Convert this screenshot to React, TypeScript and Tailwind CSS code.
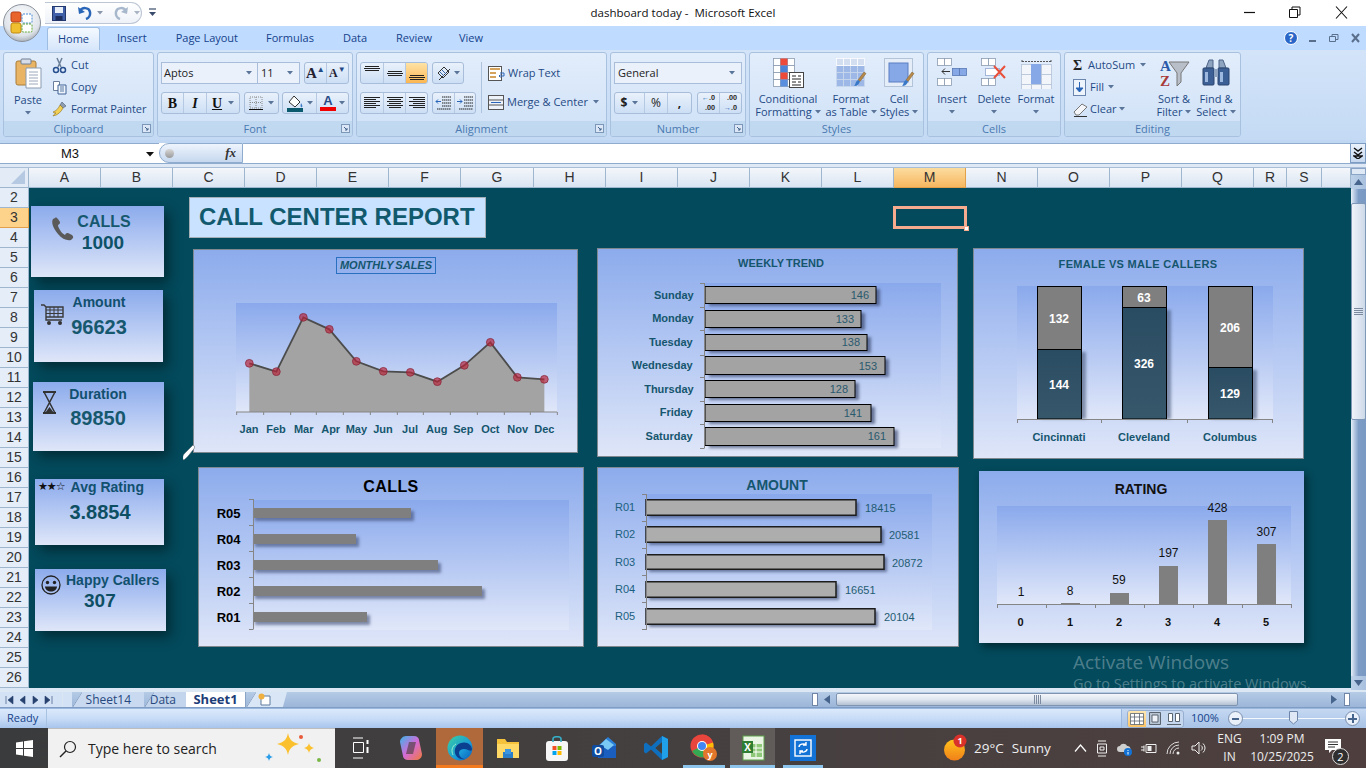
import React from "react";

const ui = "font-['Open_Sans',sans-serif]";
const ar = "font-['Liberation_Sans',Arial,sans-serif]";

function Caret({ c = "#5a7599" }: { c?: string }) {
  return (
    <svg width="6" height="4" viewBox="0 0 6 4" className="shrink-0">
      <path d="M0 0h6L3 3.5z" fill={c} />
    </svg>
  );
}

function Launcher() {
  return (
    <svg width="9" height="9" viewBox="0 0 9 9" className="shrink-0">
      <rect x=".5" y=".5" width="8" height="8" fill="#dbe7f6" stroke="#7d97b8" />
      <path d="M3 3l3 3M6 4v2H4" stroke="#45648c" fill="none" />
    </svg>
  );
}

function Group({ w, label, launcher, children }: { w: string; label: string; launcher?: boolean; children: React.ReactNode }) {
  return (
    <div className={`${w} h-[85px] shrink-0 rounded-[3px] border border-[#a7c1df] flex flex-col overflow-hidden bg-linear-to-b from-[#e2edfb] to-[#cfe1f7]`}>
      <div className="h-[68px] relative flex">{children}</div>
      <div className="h-[15px] bg-[#c1d8f1] flex items-center justify-center relative text-[11px] text-[#4a7ab0] pt-[1px]">
        <span>{label}</span>
        {launcher && (
          <span className="absolute right-[2px] top-[3px] flex">
            <Launcher />
          </span>
        )}
      </div>
    </div>
  );
}

function Tool({ className = "", children }: { className?: string; children: React.ReactNode }) {
  return <div className={`h-full flex items-center justify-center border-r border-[#b5c9e2] last:border-r-0 ${className}`}>{children}</div>;
}

function ToolGroup({ className = "", children }: { className?: string; children: React.ReactNode }) {
  return <div className={`flex rounded-[3px] border border-[#a7bdd9] bg-linear-to-b from-[#e9f1fb] to-[#cddff5] overflow-hidden ${className}`}>{children}</div>;
}

function AlignIcon({ kind }: { kind: "l" | "c" | "r" }) {
  const rows = [0, 2, 4, 6, 8, 10];
  return (
    <svg width="16" height="12" viewBox="0 0 16 12">
      {rows.map((y, i) => {
        const w = i % 2 === 0 ? 16 : 12;
        const x = kind === "l" ? 0 : kind === "c" ? (16 - w) / 2 : 16 - w;
        return <rect key={y} x={x} y={y} width={w} height="1" fill="#222" />;
      })}
    </svg>
  );
}

function VAlign({ pos }: { pos: number }) {
  return (
    <svg width="16" height="14" viewBox="0 0 16 14">
      {[0, 2, 4].map((d) => (
        <rect key={d} x={d === 2 ? 0 : 1} y={pos + d} width={d === 2 ? 16 : 14} height="1" fill="#222" />
      ))}
    </svg>
  );
}

function Cells({ x, y, cols, rows, s = 6, fill = "#fff", stroke = "#8a9bb0" }: { x: number; y: number; cols: number; rows: number; s?: number; fill?: string; stroke?: string }) {
  const out = [];
  for (let r = 0; r < rows; r++)
    for (let c = 0; c < cols; c++)
      out.push(<rect key={`${r}-${c}`} x={x + c * s + 0.5} y={y + r * s + 0.5} width={s} height={s} fill={fill} stroke={stroke} strokeWidth=".8" />);
  return <>{out}</>;
}

function Brush({ x, y }: { x: number; y: number }) {
  return (
    <g transform={`translate(${x} ${y})`}>
      <path d="M11 0l2 1.500-6 8-2-1.500z" fill="#b88a4a" stroke="#7a5a2a" strokeWidth=".5" />
      <path d="M5 8l2 1.500c-1 3-3 4.500-6 4.500 1.500-1 1.500-5 4-6z" fill="#3a78c8" />
    </g>
  );
}

function Large({ w, icon, l1, l2 }: { w: string; icon: React.ReactNode; l1: string; l2?: string }) {
  return (
    <div className={`${w} flex flex-col items-center pt-[5px]`}>
      <div className="h-[34px] flex items-start justify-center">{icon}</div>
      <div className="leading-[13px] text-center whitespace-nowrap">{l1}</div>
      <div className="leading-[13px] h-[13px] flex items-center gap-[3px] whitespace-nowrap">
        {l2 && <span>{l2}</span>}
        <Caret />
      </div>
    </div>
  );
}

function Ribbon() {
  return (
    <div className={`h-[90px] shrink-0 flex gap-[3px] pl-[3px] pt-[2px] bg-linear-to-b from-[#d3e4f9] to-[#c4daf4] ${ui} text-[11px] text-[#1f4a85]`}>
      <Group w="w-[151px]" label="Clipboard" launcher>
        <div className="w-[48px] flex flex-col items-center pt-[5px]">
          <svg width="27" height="31" viewBox="0 0 27 31">
            <rect x="1" y="3" width="20" height="24" rx="2" fill="#e9b565" stroke="#a97c38" />
            <rect x="6" y="1" width="10" height="5" rx="1" fill="#d6dde8" stroke="#6f7f94" />
            <path d="M11 10h15v20H11z" fill="#fff" stroke="#8a9bb0" />
            <path d="M14 14h9M14 17h9M14 20h9M14 23h9M14 26h9" stroke="#9aa8ba" />
          </svg>
          <span className="mt-[4px] leading-[13px]">Paste</span>
          <span className="mt-[5px]"><Caret /></span>
        </div>
        <div className="flex flex-col pt-[1px]">
          <div className="h-[22px] flex items-center gap-[4px]">
            <svg width="15" height="17" viewBox="0 0 15 17">
              <path d="M5 1l4 9M10 1L6 10" stroke="#6b7f99" strokeWidth="1.500" fill="none" />
              <circle cx="4" cy="13" r="2.500" fill="none" stroke="#28508f" strokeWidth="1.500" />
              <circle cx="11" cy="13" r="2.500" fill="none" stroke="#28508f" strokeWidth="1.500" />
            </svg>
            <span>Cut</span>
          </div>
          <div className="h-[22px] flex items-center gap-[4px]">
            <svg width="15" height="15" viewBox="0 0 15 15">
              <path d="M1.500 1.500h6v9h-6z" fill="#fff" stroke="#6a7f9c" />
              <path d="M6 5h8v9H6z" fill="#eef4fb" stroke="#3f6296" />
              <path d="M8 7h4M8 9h4M8 11h4" stroke="#5878a5" />
            </svg>
            <span>Copy</span>
          </div>
          <div className="h-[22px] flex items-center gap-[3px]">
            <svg width="16" height="16" viewBox="0 0 16 16">
              <path d="M10 1l4 4-3 2-3-3z" fill="#8e9cb0" stroke="#4a5a72" strokeWidth=".6" />
              <path d="M8 4l3 3c-2 4-5 7-10 8 1-2 3-3 3-3-1 0-2 0-3-1 3-1 5-3 7-7z" fill="#f2cf55" stroke="#8e6f1f" strokeWidth=".6" />
            </svg>
            <span className="whitespace-nowrap tracking-[-0.1px]">Format Painter</span>
          </div>
        </div>
      </Group>

      <Group w="w-[196px]" label="Font" launcher>
        <div className="pl-[3px] pt-[9px] flex flex-col gap-[8px]">
          <div className="flex h-[22px]">
            <div className="w-[97px] bg-[#eaf1fb] border border-[#a7bdd9] flex items-center justify-between px-[2px] text-[#222]">
              <span>Aptos</span>
              <span className="pr-[3px]"><Caret /></span>
            </div>
            <div className="w-[42px] bg-[#eaf1fb] border border-l-0 border-[#a7bdd9] flex items-center justify-between px-[3px] text-[#222]">
              <span>11</span>
              <span className="pr-[3px]"><Caret /></span>
            </div>
            <ToolGroup className="ml-[4px] w-[45px]">
              <Tool className="w-[22px]"><span className="font-['Liberation_Serif',serif] font-bold text-[15px] text-[#223]">A</span><span className="text-[8px] leading-none -mt-[8px]">▲</span></Tool>
              <Tool className="w-[22px]"><span className="font-['Liberation_Serif',serif] font-bold text-[12px] text-[#223]">A</span><span className="text-[8px] leading-none -mt-[8px]">▼</span></Tool>
            </ToolGroup>
          </div>
          <div className="flex h-[22px]">
            <ToolGroup className="w-[79px]">
              <Tool className="w-[22px]"><span className="font-['Liberation_Serif',serif] font-bold text-[14px] text-[#111]">B</span></Tool>
              <Tool className="w-[23px]"><span className="font-['Liberation_Serif',serif] font-bold italic text-[14px] text-[#111]">I</span></Tool>
              <Tool className="flex-1 gap-[6px]"><span className="font-['Liberation_Serif',serif] font-bold underline text-[14px] text-[#111]">U</span><Caret /></Tool>
            </ToolGroup>
            <ToolGroup className="ml-[4px] w-[35px]">
              <Tool className="flex-1 gap-[5px]">
                <svg width="14" height="14" viewBox="0 0 14 14">
                  <path d="M1 1h12v11H1zM7 1v11M1 6.500h12" stroke="#8a8a8a" strokeDasharray="1 1" fill="none" />
                  <path d="M0 13.500h14" stroke="#111" />
                </svg>
                <Caret />
              </Tool>
            </ToolGroup>
            <ToolGroup className="ml-[3px] w-[67px]">
              <Tool className="w-[34px] gap-[3px]">
                <svg width="17" height="17" viewBox="0 0 17 17">
                  <path d="M7 1l6 6-5 5-6-5z" fill="#fff" stroke="#333" />
                  <path d="M14 8c1 2 2 3 1 4s-2 0-1-4z" fill="#3a78c8" />
                  <rect x="0" y="13" width="16" height="4" fill="#0c5a6e" />
                </svg>
                <Caret />
              </Tool>
              <Tool className="flex-1 gap-[3px]">
                <div className="flex flex-col items-center">
                  <span className={`${ar} font-bold text-[13px] leading-[12px] text-[#274a86]`}>A</span>
                  <span className="w-[16px] h-[4px] bg-[#f00000]" />
                </div>
                <Caret />
              </Tool>
            </ToolGroup>
          </div>
        </div>
      </Group>

      <Group w="w-[251px]" label="Alignment" launcher>
        <div className="pl-[3px] pt-[9px] flex flex-col gap-[8px] w-[124px]">
          <div className="flex h-[22px] gap-[4px]">
            <ToolGroup className="w-[68px]">
              <Tool className="w-[23px]"><VAlign pos={0} /></Tool>
              <Tool className="w-[22px]"><VAlign pos={5} /></Tool>
              <Tool className="flex-1 bg-linear-to-b from-[#fde3a5] to-[#fbb64f]"><VAlign pos={9} /></Tool>
            </ToolGroup>
            <ToolGroup className="w-[32px]">
              <Tool className="flex-1 gap-[2px]">
                <svg width="16" height="15" viewBox="0 0 16 15">
                  <path d="M2 7l6-6 5 5-6 6zM3 14l11-11" stroke="#333" fill="none" />
                  <path d="M4 6l4 4M6 4l4 4" stroke="#3a68a8" />
                </svg>
                <Caret />
              </Tool>
            </ToolGroup>
          </div>
          <div className="flex h-[22px] gap-[4px]">
            <ToolGroup className="w-[68px]">
              <Tool className="w-[23px]"><AlignIcon kind="l" /></Tool>
              <Tool className="w-[22px]"><AlignIcon kind="c" /></Tool>
              <Tool className="flex-1"><AlignIcon kind="r" /></Tool>
            </ToolGroup>
            <ToolGroup className="w-[44px]">
              {[0, 1].map((k) => (
                <Tool key={k} className="flex-1">
                  <svg width="16" height="14" viewBox="0 0 16 14">
                    <path d="M7 1h9M7 4h9M7 7h9M7 10h9M2 13h14" stroke="#222" strokeDasharray="1.500 .5" />
                    <path d={k === 0 ? "M6 5.500H1m2-2l-2 2 2 2" : "M0 5.500h5m-2-2l2 2-2 2"} stroke="#2a66b8" fill="none" />
                  </svg>
                </Tool>
              ))}
            </ToolGroup>
          </div>
        </div>
        <div className="self-start mt-[9px] h-[51px] w-px bg-[#aec3dd]" />
        <div className="pl-[6px] pt-[9px] flex flex-col gap-[6px]">
          <div className="h-[23px] flex items-center gap-[3px] whitespace-nowrap">
            <svg width="17" height="15" viewBox="0 0 17 15">
              <rect x=".5" y=".5" width="13" height="14" fill="#fff" stroke="#555" />
              <path d="M2 3h10M2 7h6M2 11h6" stroke="#c6862a" strokeWidth="1.500" />
              <path d="M12 7h4v3h-5m1.500-1.500L11 10l1.500 1.500" stroke="#2a66b8" fill="none" />
            </svg>
            <span>Wrap Text</span>
          </div>
          <div className="h-[22px] flex items-center gap-[3px] whitespace-nowrap">
            <svg width="16" height="15" viewBox="0 0 16 15">
              <rect x=".5" y=".5" width="15" height="14" fill="#eef3fa" stroke="#555" />
              <path d="M.5 5h15M.5 10h15" stroke="#555" />
              <path d="M3 7.500h10" stroke="#2a66b8" />
            </svg>
            <span>Merge &amp; Center</span>
            <span className="ml-[2px]"><Caret /></span>
          </div>
        </div>
      </Group>

      <Group w="w-[136px]" label="Number" launcher>
        <div className="pl-[3px] pt-[9px] flex flex-col gap-[8px]">
          <div className="w-[128px] h-[22px] bg-[#eaf1fb] border border-[#a7bdd9] flex items-center justify-between px-[3px] text-[#222]">
            <span>General</span>
            <span className="pr-[3px]"><Caret /></span>
          </div>
          <div className="flex h-[22px] gap-[5px]">
            <ToolGroup className="w-[78px]">
              <Tool className="w-[30px] gap-[5px]"><span className="font-bold text-[12px] text-[#222]">$</span><Caret /></Tool>
              <Tool className="w-[23px]"><span className="text-[12px] text-[#222]">%</span></Tool>
              <Tool className="flex-1"><span className="font-bold text-[12px] text-[#222]">,</span></Tool>
            </ToolGroup>
            <ToolGroup className="w-[45px]">
              <Tool className="flex-1"><div className="text-[7px] leading-[10px] font-bold text-[#333] text-right"><div><span className="text-[#2a66b8]">←</span>.0</div><div>.00</div></div></Tool>
              <Tool className="flex-1"><div className="text-[7px] leading-[10px] font-bold text-[#333] text-right"><div>.00</div><div><span className="text-[#2a66b8]">→</span>.0</div></div></Tool>
            </ToolGroup>
          </div>
        </div>
      </Group>

      <Group w="w-[175px]" label="Styles">
        <Large
          w="w-[76px]"
          l1="Conditional"
          l2="Formatting"
          icon={
            <svg width="31" height="30" viewBox="0 0 31 30">
              <Cells x={0} y={0} cols={3} rows={4} s={7} />
              <rect x="7.500" y=".5" width="7" height="7" fill="#ee4a3a" />
              <rect x="7.500" y="7.500" width="7" height="7" fill="#4a82d8" />
              <rect x="7.500" y="14.500" width="7" height="7" fill="#ee4a3a" />
              <rect x="7.500" y="21.500" width="7" height="7" fill="#5a8fe0" />
              <rect x="16.500" y="14.500" width="14" height="15" fill="#fff" stroke="#444" />
              <path d="M19 18h4M25 18h3M19 21h9M19 24h4M25 24h3M19 27h9" stroke="#222" />
            </svg>
          }
        />
        <Large
          w="w-[50px]"
          l1="Format"
          l2="as Table"
          icon={
            <svg width="31" height="31" viewBox="0 0 31 31">
              <Cells x={0} y={0} cols={4} rows={4} s={7} fill="#9db8e6" stroke="#c9d7ec" />
              <Cells x={0} y={0} cols={4} rows={1} s={7} fill="#d3def0" stroke="#fff" />
              <Brush x={17} y={14} />
            </svg>
          }
        />
        <Large
          w="w-[46px]"
          l1="Cell"
          l2="Styles"
          icon={
            <svg width="31" height="31" viewBox="0 0 31 31">
              <rect x=".5" y=".5" width="28" height="28" fill="#e4edf8" stroke="#b3c3d8" />
              <rect x="5" y="5" width="19" height="19" fill="#86a8e6" stroke="#5a7fc4" />
              <Brush x={17} y={14} />
            </svg>
          }
        />
      </Group>

      <Group w="w-[134px]" label="Cells">
        <Large
          w="w-[48px]"
          l1="Insert"
          icon={
            <svg width="30" height="30" viewBox="0 0 30 30">
              <Cells x={0} y={0} cols={2} rows={1} s={7} />
              <Cells x={0} y={20} cols={2} rows={1} s={7} />
              <Cells x={15} y={10} cols={2} rows={1} s={7} fill="#86a8e6" stroke="#5878b4" />
              <path d="M13 13.500H5m3-3l-3 3 3 3" stroke="#333" fill="none" />
            </svg>
          }
        />
        <Large
          w="w-[36px]"
          l1="Delete"
          icon={
            <svg width="26" height="30" viewBox="0 0 26 30">
              <Cells x={0} y={0} cols={2} rows={1} s={7} />
              <Cells x={0} y={20} cols={2} rows={1} s={7} />
              <rect x="4.500" y="10.500" width="14" height="7" fill="#fff" stroke="#5878b4" strokeDasharray="1 1" />
              <path d="M13 8l11 12M24 8L13 20" stroke="#e8503a" strokeWidth="2" />
            </svg>
          }
        />
        <Large
          w="w-[48px]"
          l1="Format"
          icon={
            <svg width="31" height="31" viewBox="0 0 31 31">
              <path d="M1 2v3M30 2v3M1 3.500h29" stroke="#555" strokeDasharray="2 1" />
              <Cells x={0} y={6} cols={3} rows={3} s={10} fill="#f2f6fb" stroke="#b5c3d6" />
              <rect x="10" y="6" width="10" height="20" fill="#86a8e6" />
            </svg>
          }
        />
      </Group>

      <Group w="w-[177px]" label="Editing">
        <div className="w-[88px] pl-[8px] pt-[1px] flex flex-col">
          <div className="h-[22px] flex items-center gap-[5px] whitespace-nowrap">
            <span className="font-['Liberation_Serif',serif] font-bold text-[14px] text-[#222] w-[10px]">Σ</span>
            <span>AutoSum</span>
            <Caret />
          </div>
          <div className="h-[22px] flex items-center gap-[4px] whitespace-nowrap">
            <svg width="13" height="17" viewBox="0 0 13 17" className="shrink-0">
              <rect x=".5" y=".5" width="12" height="16" fill="#eef4fb" stroke="#6a86ae" />
              <path d="M6.500 3v9M3 9l3.500 4L10 9z" fill="#2a66b8" stroke="#2a66b8" />
            </svg>
            <span>Fill</span>
            <Caret />
          </div>
          <div className="h-[22px] flex items-center gap-[2px] whitespace-nowrap">
            <svg width="15" height="15" viewBox="0 0 15 15" className="shrink-0">
              <path d="M1 10l8-8 5 3-8 8H3z" fill="#f4f6f9" stroke="#777" />
              <path d="M1 14.500h13" stroke="#333" />
            </svg>
            <span>Clear</span>
            <Caret />
          </div>
        </div>
        <Large
          w="w-[42px]"
          l1="Sort &"
          l2="Filter"
          icon={
            <svg width="31" height="31" viewBox="0 0 31 31">
              <text x="1" y="13" className="font-['Liberation_Serif',serif] font-bold text-[15px]" fill="#2a5aa8">A</text>
              <text x="1" y="28" className="font-['Liberation_Serif',serif] font-bold text-[15px]" fill="#a83a3a">Z</text>
              <path d="M10 4h20l-8 11v9l-4 4V15z" fill="#b9bfc8" stroke="#777" />
            </svg>
          }
        />
        <Large
          w="w-[42px]"
          l1="Find &"
          l2="Select"
          icon={
            <svg width="28" height="30" viewBox="0 0 28 30">
              <path d="M4 10l3-8h4v8zM17 10V2h4l3 8z" fill="#8ea3c0" stroke="#4c6488" />
              <rect x="1" y="10" width="11" height="17" rx="1" fill="#3c5f95" stroke="#2a446e" />
              <rect x="16" y="10" width="11" height="17" rx="1" fill="#3c5f95" stroke="#2a446e" />
              <rect x="12" y="11" width="4" height="8" fill="#8ea3c0" />
              <rect x="3" y="14" width="3" height="10" fill="#9db9df" />
              <rect x="18" y="14" width="3" height="10" fill="#9db9df" />
            </svg>
          }
        />
      </Group>
    </div>
  );
}

function TitleBar() {
  return (
    <div className={`h-[26px] shrink-0 bg-white flex items-center justify-center relative ${ui} text-[11.5px] text-[#111]`}>
      <svg width="40" height="40" viewBox="0 0 40 40" className="absolute left-[2px] top-[3px] z-10">
        <defs>
          <radialGradient id="ob" cx=".5" cy=".35" r=".7">
            <stop offset="0" stopColor="#ffffff" />
            <stop offset=".7" stopColor="#dfe4ea" />
            <stop offset="1" stopColor="#9aa2ac" />
          </radialGradient>
        </defs>
        <circle cx="20" cy="20" r="18.500" fill="url(#ob)" stroke="#8a919b" />
        <rect x="9" y="9" width="10" height="10" rx="2" fill="#e8642a" stroke="#b8401a" />
        <rect x="20" y="11" width="10" height="9" rx="1" fill="#fff" stroke="#4a8ad4" strokeDasharray="2 1" />
        <rect x="9" y="20" width="10" height="10" rx="2" fill="#f0c030" stroke="#c08a10" />
        <rect x="20" y="21" width="10" height="8" rx="1" fill="#fff" stroke="#60a838" strokeDasharray="2 1" />
      </svg>
      <div className="absolute left-[45px] top-[2px] h-[22px] w-[97px] rounded-r-[12px] border border-[#bcc6d4] border-l-0 bg-linear-to-b from-white to-[#eef2f8] flex items-center pl-[7px] gap-[5px]">
        <svg width="14" height="15" viewBox="0 0 14 15">
          <rect x=".5" y=".5" width="13" height="14" fill="#3f5fa8" stroke="#23386e" />
          <rect x="3" y="1" width="8" height="6" fill="#e8eef8" />
          <rect x="3.500" y="10" width="7" height="4.500" fill="#1d2e5e" />
        </svg>
        <svg width="15" height="14" viewBox="0 0 15 14" className="ml-[6px]">
          <path d="M3 5c2-4 9-4 10 1 .5 3-1 6-4 7" fill="none" stroke="#2a66b8" strokeWidth="2.500" />
          <path d="M1 1l1 7 6-2z" fill="#2a66b8" />
        </svg>
        <Caret c="#8a97ab" />
        <svg width="15" height="14" viewBox="0 0 15 14" className="ml-[6px]">
          <path d="M12 5C10 1 3 1 2 6c-.5 3 1 6 4 7" fill="none" stroke="#a8b8cc" strokeWidth="2.500" />
          <path d="M14 1l-1 7-6-2z" fill="#a8b8cc" />
        </svg>
        <Caret c="#a8b4c4" />
      </div>
      <svg width="7" height="9" viewBox="0 0 7 9" className="absolute left-[149px] top-[8px]">
        <path d="M0 1h7" stroke="#3a4c6c" strokeWidth="1.200" />
        <path d="M0 4h7L3.500 8z" fill="#3a4c6c" />
      </svg>
      <span>dashboard today -&nbsp;&nbsp;Microsoft Excel</span>
      <div className="absolute right-[2px] top-0 h-[26px] flex items-center">
        <svg width="46" height="26" viewBox="0 0 46 26"><path d="M18 12.500h11" stroke="#111" strokeWidth="1.200" /></svg>
        <svg width="46" height="26" viewBox="0 0 46 26"><path d="M17.500 9.500h8v8h-8zM20 9V7h8v8h-2" fill="none" stroke="#111" /></svg>
        <svg width="46" height="26" viewBox="0 0 46 26"><path d="M18 6.500l11 12M29 6.500l-11 12" stroke="#111" strokeWidth="1.100" /></svg>
      </div>
    </div>
  );
}

function TabsRow() {
  const tabs: [string, string][] = [
    ["Insert", "ml-[17px]"],
    ["Page Layout", "ml-[29px]"],
    ["Formulas", "ml-[28px]"],
    ["Data", "ml-[29px]"],
    ["Review", "ml-[29px]"],
    ["View", "ml-[27px]"],
  ];
  return (
    <div className={`h-[24px] shrink-0 bg-[#bfdbff] flex items-end pl-[47px] relative ${ui} text-[11px] text-[#15428b]`}>
      <div className="w-[53px] h-[23px] rounded-t-[3px] border border-b-0 border-[#9dbde3] bg-linear-to-b from-[#f4f9ff] to-[#d6e6fa] flex items-center justify-center">Home</div>
      {tabs.map(([t, m]) => (
        <div key={t} className={`${m} h-[23px] flex items-center`}>{t}</div>
      ))}
      <div className="absolute right-[4px] top-[3px] h-[18px] flex items-center gap-[10px]">
        <span className="w-[14px] h-[14px] rounded-full bg-[#2a66c8] border border-white text-white text-[10px] font-bold leading-[12px] text-center">?</span>
        <svg width="10" height="10" viewBox="0 0 10 10"><path d="M1 8h7" stroke="#5a6f8c" strokeWidth="2" /></svg>
        <svg width="12" height="10" viewBox="0 0 12 10"><path d="M1.500 3.500h6v5h-6zM4 3V1.500h6v5H8" fill="none" stroke="#5a6f8c" /></svg>
        <svg width="12" height="10" viewBox="0 0 12 10"><path d="M2 1l7 8M9 1L2 9" stroke="#5a6f8c" strokeWidth="2" /></svg>
      </div>
    </div>
  );
}

function FormulaBar() {
  return (
    <div className="shrink-0 bg-[#d5e3f5]">
      <div className="h-[3px] bg-[#bfd7f3]" />
      <div className={`h-[20px] flex bg-white ${ar}`}>
        <div className="w-[159px] relative flex items-center border-t border-[#8fabcd] text-[13px] text-[#111]">
          <span className="ml-[61px]">M3</span>
          <svg width="8" height="5" viewBox="0 0 8 5" className="absolute right-[5px] top-[8px]"><path d="M0 0h8L4 4.500z" fill="#111" /></svg>
        </div>
        <div className="w-[84px] rounded-l-[10px] border border-[#8fabcd] bg-linear-to-b from-[#eef4fc] to-[#c6d8ef] flex items-center justify-between pl-[5px] pr-[6px]">
          <span className="w-[9px] h-[9px] rounded-full bg-linear-to-b from-[#d8d8d8] to-[#9a9a9a]" />
          <span className="font-['Liberation_Serif',serif] italic font-bold text-[13px] text-[#333]">fx</span>
        </div>
        <div className="flex-1 border-t border-[#8fabcd]" />
        <div className="w-[16px] border border-[#7d9cc4] bg-linear-to-b from-[#eaf2fb] to-[#c6d8ef] flex items-center justify-center">
          <svg width="10" height="12" viewBox="0 0 10 12"><path d="M1 1l4 3 4-3M1 5l4 3 4-3M1 9h8L5 12z" fill="none" stroke="#111" strokeWidth="1.400" /></svg>
        </div>
      </div>
      <div className="h-[5px] border-t border-[#8fabcd] bg-[#dfe9f6] border-b border-b-[#a8bdd8]" />
    </div>
  );
}

const columns: [string, string][] = [
  ["A", "w-[72px]"], ["B", "w-[72px]"], ["C", "w-[72px]"], ["D", "w-[72px]"], ["E", "w-[72px]"], ["F", "w-[72px]"], ["G", "w-[73px]"],
  ["H", "w-[72px]"], ["I", "w-[72px]"], ["J", "w-[72px]"], ["K", "w-[72px]"], ["L", "w-[72px]"], ["M", "w-[72px]"], ["N", "w-[72px]"],
  ["O", "w-[72px]"], ["P", "w-[72px]"], ["Q", "w-[72px]"], ["R", "w-[33px]"], ["S", "w-[35px]"], ["", "w-[29px]"],
];

function ColumnHeader() {
  return (
    <div className={`h-[20px] flex ${ar} text-[14px] text-[#333]`}>
      <div className="w-[29px] bg-[#e3ebf6] border-r border-b border-[#9eb6ce] flex items-end justify-end p-[3px]">
        <svg width="14" height="14" viewBox="0 0 14 14"><path d="M14 0v14H0z" fill="#b5c9e3" /></svg>
      </div>
      {columns.map(([c, w]) => (
        <div
          key={c || "blank"}
          className={`${w} border-r border-b flex items-center justify-center ${c === "M" ? "border-[#e2a04a] bg-linear-to-b from-[#fbdc9e] to-[#f6b75f]" : "border-[#9eb6ce] bg-linear-to-b from-[#f4f7fb] to-[#d9e4f2]"}`}
        >
          {c}
        </div>
      ))}
    </div>
  );
}

function RowHeader() {
  const rows = Array.from({ length: 25 }, (_, i) => i + 2);
  return (
    <div className={`w-[29px] shrink-0 flex flex-col ${ar} text-[14px] text-[#333]`}>
      {rows.map((r) => (
        <div
          key={r}
          className={`h-[20px] border-r border-b flex items-center justify-center ${r === 3 ? "border-[#e2a04a] bg-[#fdd38c]" : "border-[#9eb6ce] bg-[#e5edf8]"}`}
        >
          {r}
        </div>
      ))}
    </div>
  );
}

const cardBase = "absolute bg-linear-to-b from-[#8cabec] to-[#dfe6f8] shadow-[5px_6px_12px_rgba(0,0,0,0.42)] text-[#0e5268] font-bold";

function Cards() {
  return (
    <div className={ar}>
      <div className={`${cardBase} left-[2px] top-[18px] w-[133px] h-[71px] flex pl-[20px] pt-[11px]`}>
        <svg width="24" height="25" viewBox="0 0 24 25" className="shrink-0">
          <path d="M2 2c-2 3 0 9 5 15 4 5 9 7 13 6l2-2c.5-1 0-2-1-3l-4-2c-1 0-2 0-3 2-2-1-4-3-5-5-1-2-2-3-2-5 2-1 2-2 2-3L7 2C6 1 5 0 4 1z" fill="#5a5a5a" />
        </svg>
        <div className="w-[60px] -ml-[1px] flex flex-col items-center -mt-[5px]">
          <span className="text-[16px] leading-[19px] text-[#16586e]">CALLS</span>
          <span className="text-[19px] leading-[23px] -ml-[2px]">1000</span>
        </div>
      </div>
      <div className={`${cardBase} left-[5px] top-[102px] w-[129px] h-[72px] flex pl-[7px] pt-[14px]`}>
        <svg width="23" height="22" viewBox="0 0 23 22" className="shrink-0">
          <path d="M0 1h3l2 2M5 3h17v10H5zM5 13v3h16" fill="none" stroke="#3a3a3a" strokeWidth="1.400" />
          <path d="M9 3v10M13 3v10M17 3v10M5 6h17M5 9.500h17" stroke="#3a3a3a" />
          <circle cx="8" cy="19" r="2" fill="#333" />
          <circle cx="19" cy="19" r="2" fill="#333" />
        </svg>
        <div className="w-[62px] ml-[4px] flex flex-col items-center -mt-[11px]">
          <span className="text-[14px] leading-[18px] text-[#11506e]">Amount</span>
          <span className="text-[20px] leading-[23px] mt-[5px] text-[#16586e]">96623</span>
        </div>
      </div>
      <div className={`${cardBase} left-[4px] top-[194px] w-[131px] h-[69px] flex pl-[9px] pt-[9px]`}>
        <svg width="15" height="23" viewBox="0 0 15 23" className="shrink-0">
          <path d="M1 1h13M1 22h13" stroke="#333" strokeWidth="2" />
          <path d="M2 1l5.500 10.500L2 22M13 1L7.500 11.500 13 22" fill="none" stroke="#333" strokeWidth="1.500" />
          <path d="M3 22l4.500-6 4.500 6z" fill="#333" />
        </svg>
        <div className="w-[70px] ml-[6px] flex flex-col items-center -mt-[6px]">
          <span className="text-[14px] leading-[18px] text-[#11506e]">Duration</span>
          <span className="text-[20px] leading-[23px] mt-[4px] text-[#16586e]">89850</span>
        </div>
      </div>
      <div className={`${cardBase} left-[6px] top-[291px] w-[129px] h-[66px] flex flex-col items-center`}>
        <div className="flex items-center whitespace-nowrap pl-[3px] h-[18px] -mt-[1px] self-start">
          <span className="text-[11px] text-[#111] font-['DejaVu_Sans',sans-serif] tracking-[-1px] mr-[6px]">★★☆</span>
          <span className="text-[14px] text-[#11506e]">Avg Rating</span>
        </div>
        <span className="text-[20px] leading-[23px] mt-[5px] ml-[1px] text-[#0e4f64]">3.8854</span>
      </div>
      <div className={`${cardBase} left-[6px] top-[381px] w-[131px] h-[62px] flex pl-[6px] pt-[6px]`}>
        <svg width="20" height="20" viewBox="0 0 20 20" className="shrink-0">
          <circle cx="10" cy="10" r="9" fill="none" stroke="#222" strokeWidth="1.300" />
          <circle cx="6.500" cy="7.500" r="1.700" fill="#222" />
          <circle cx="13.500" cy="7.500" r="1.700" fill="#222" />
          <path d="M4 11.500h12c0 3-3 5-6 5s-6-2-6-5z" fill="#222" />
        </svg>
        <div className="flex flex-col ml-[5px] -mt-[4px] w-[94px] whitespace-nowrap">
          <span className="text-[14px] leading-[18px] text-[#11506e]">Happy Callers</span>
          <span className="text-[19px] leading-[23px] text-[#0e4f64] ml-[18px]">307</span>
        </div>
      </div>
    </div>
  );
}

function Defs({ id }: { id: string }) {
  return (
    <defs>
      <linearGradient id={`${id}g`} x1="0" y1="0" x2="0" y2="1">
        <stop offset="0" stopColor="#8aa9ec" />
        <stop offset="1" stopColor="#e0e7f9" />
      </linearGradient>
      <filter id={`${id}b`} x="-10%" y="-30%" width="120%" height="170%">
        <feGaussianBlur stdDeviation="1.500" />
      </filter>
    </defs>
  );
}

const chartBase = `absolute bg-linear-to-b from-[#8cabec] to-[#dfe6f8] ${ar}`;
const outlineBase = "outline outline-1 -outline-offset-1 outline-[#7f878f]";
const axis = "#858585";

function Monthly() {
  const xs = [193, 274, 355, 433, 514, 595, 676, 757, 838, 916, 997, 1078].map((v) => 185 + v / 3);
  const ys = [520, 545, 382, 418, 514, 544, 547, 575, 526, 457, 562, 568].map((v) => 190 + v / 3);
  const pts = xs.map((x, i) => `${x},${ys[i]}`).join(" ");
  const labels = ["Jan", "Feb", "Mar", "Apr", "May", "Jun", "Jul", "Aug", "Sep", "Oct", "Nov", "Dec"];
  const lx = [192, 273, 356, 437, 514, 594, 675, 755, 835, 916, 998, 1078].map((v) => 185 + v / 3);
  const ticks = [155, 236, 317, 394, 475, 556, 637, 715, 796, 877, 958, 1036, 1117].map((v) => 185 + v / 3);
  return (
    <div className={`${chartBase} ${outlineBase} left-[164px] top-[61px] w-[385px] h-[204px]`}>
      <svg width="385" height="204" viewBox="193 249 385 204" className="block">
        <Defs id="m" />
        <rect x="236" y="303" width="321" height="109" fill="url(#mg)" />
        <polygon points={`${xs[0]},412 ${pts} ${xs[11]},412`} fill="#a3a3a3" />
        <polyline points={pts} fill="none" stroke="#4c4c4c" strokeWidth="1.800" />
        {xs.map((x, i) => (
          <circle key={i} cx={x} cy={ys[i]} r="3.900" fill="#b8233a" fillOpacity=".68" stroke="#8a2a3e" strokeWidth=".8" />
        ))}
        <path d="M236 412h321" stroke={axis} strokeWidth="1" />
        {ticks.map((x) => (
          <path key={x} d={`M${x} 412v3`} stroke={axis} />
        ))}
        {labels.map((l, i) => (
          <text key={l} x={lx[i]} y="433" textAnchor="middle" className="text-[11px] font-bold fill-[#15566e]">{l}</text>
        ))}
        <rect x="336.500" y="257.500" width="99" height="16" fill="none" stroke="#2a70c0" />
        <text x="386" y="269" textAnchor="middle" className="text-[11px] font-bold italic fill-[#15566e] [word-spacing:-1px]">MONTHLY SALES</text>
      </svg>
    </div>
  );
}

function Weekly() {
  const rows: [string, number, number, number, number, number, number][] = [
    ["Sunday", 286, 303, 876, 693.7, 869, 295],
    ["Monday", 310, 327, 861, 693.7, 854, 319],
    ["Tuesday", 334, 350, 867, 692.7, 860, 342],
    ["Wednesday", 356, 374, 885, 692.7, 877, 366],
    ["Thursday", 380, 397, 855, 693.7, 848, 389],
    ["Friday", 404, 421, 871, 692.7, 862, 413],
    ["Saturday", 427, 445, 894, 692.7, 886, 436],
  ];
  const vals = [146, 133, 138, 153, 128, 141, 161];
  const ly = [295, 318, 342, 365, 389, 412, 436];
  const ticks = [283.3, 307.3, 330.3, 354.7, 377.3, 401.3, 424.3, 448];
  return (
    <div className={`${chartBase} ${outlineBase} left-[568px] top-[60px] w-[361px] h-[209px]`}>
      <svg width="361" height="209" viewBox="597 248 361 209" className="block">
        <Defs id="w" />
        <rect x="705" y="283" width="236" height="165" fill="url(#wg)" />
        {rows.map((r) => (
          <rect key={r[0]} x="709" y={r[1] + 3} width={r[3] - 705} height={r[2] - r[1]} fill="#3a4a70" fillOpacity=".7" filter="url(#wb)" />
        ))}
        {rows.map((r) => (
          <rect key={r[0]} x="705" y={r[1] + 0.5} width={r[3] - 705} height={r[2] - r[1]} fill="#a3a3a3" stroke="#000" strokeWidth="1" />
        ))}
        <path d="M704.500 283v165" stroke={axis} />
        {ticks.map((y) => (
          <path key={y} d={`M700 ${Math.round(y) + 0.5}h4.500`} stroke={axis} />
        ))}
        <text x="781" y="267" textAnchor="middle" className="text-[11px] font-bold fill-[#15566e] [word-spacing:-1px]">WEEKLY TREND</text>
        {rows.map((r, i) => (
          <text key={r[0]} x={r[4]} y={ly[i] + 4} textAnchor="end" className="text-[11px] font-bold fill-[#15566e]">{r[0]}</text>
        ))}
        {rows.map((r, i) => (
          <text key={r[0]} x={r[5]} y={r[6] + 4} textAnchor="end" className="text-[11px] fill-[#2a5a6e]">{vals[i]}</text>
        ))}
      </svg>
    </div>
  );
}

function Female() {
  const bars: [number, number, string, string, string, number, number][] = [
    [1037, 349, "132", "144", "Cincinnati", 319, 385],
    [1122, 307, "63", "326", "Cleveland", 298, 364],
    [1208, 367, "206", "129", "Columbus", 328, 394],
  ];
  return (
    <div className={`${chartBase} ${outlineBase} left-[944px] top-[60px] w-[331px] h-[211px]`}>
      <svg width="331" height="211" viewBox="973 248 331 211" className="block">
        <Defs id="f" />
        <linearGradient id="fd" x1="0" y1="0" x2="0" y2="1">
          <stop offset="0" stopColor="#2a4c62" />
          <stop offset="1" stopColor="#37576b" />
        </linearGradient>
        <rect x="1017" y="286" width="256" height="133" fill="url(#fg)" />
        {bars.map((b) => (
          <rect key={b[0]} x={b[0] + 4} y={b[1] + 3} width="45" height={419 - b[1] - 3} fill="#3a4a70" fillOpacity=".55" filter="url(#fb)" />
        ))}
        {bars.map((b) => (
          <g key={b[0]}>
            <rect x={b[0] + 0.5} y="286.500" width="44" height={b[1] - 286} fill="#7f7f7f" stroke="#000" />
            <rect x={b[0] + 0.5} y={b[1] + 0.5} width="44" height={419 - b[1] - 0.5} fill="url(#fd)" stroke="#000" />
          </g>
        ))}
        <path d="M1017 419.500h256" stroke={axis} />
        {[1017, 1101, 1187, 1272].map((x) => (
          <path key={x} d={`M${x + 0.5} 419v4`} stroke={axis} />
        ))}
        <text x="1138" y="268" textAnchor="middle" className="text-[11px] font-bold fill-[#15566e] tracking-[0.3px]">FEMALE VS MALE CALLERS</text>
        {bars.map((b) => (
          <g key={b[0]}>
            <text x={b[0] + 22} y={b[5] + 4} textAnchor="middle" className="text-[12px] font-bold fill-white">{b[2]}</text>
            <text x={b[0] + 22} y={b[6] + 4} textAnchor="middle" className="text-[12px] font-bold fill-white">{b[3]}</text>
            <text x={b[0] + 22} y="441" textAnchor="middle" className="text-[11px] font-bold fill-[#15566e]">{b[4]}</text>
          </g>
        ))}
      </svg>
    </div>
  );
}

function Calls() {
  const rows: [string, number, number][] = [
    ["R05", 508, 411],
    ["R04", 534, 356],
    ["R03", 560, 438],
    ["R02", 586, 482],
    ["R01", 612, 367],
  ];
  return (
    <div className={`${chartBase} ${outlineBase} left-[169px] top-[279px] w-[386px] h-[180px]`}>
      <svg width="386" height="180" viewBox="198 467 386 180" className="block">
        <Defs id="c" />
        <rect x="253" y="500" width="316" height="130" fill="url(#cg)" />
        {rows.map((r) => (
          <rect key={r[0]} x="255" y={r[1] + 3} width={r[2] - 252} height="10" fill="#3a4a70" fillOpacity=".6" filter="url(#cb)" />
        ))}
        {rows.map((r) => (
          <rect key={r[0]} x="253" y={r[1]} width={r[2] - 253} height="10" fill="#7f7f7f" />
        ))}
        <path d="M253.500 499v130" stroke={axis} />
        {[499, 525, 551, 577, 603, 629].map((y) => (
          <path key={y} d={`M249 ${y + 0.5}h4.500`} stroke={axis} />
        ))}
        <text x="391" y="492" textAnchor="middle" className="text-[16px] font-bold fill-black tracking-[0.4px]">CALLS</text>
        {rows.map((r) => (
          <text key={r[0]} x="240.500" y={r[1] + 10} textAnchor="end" className="text-[13px] font-bold fill-black">{r[0]}</text>
        ))}
      </svg>
    </div>
  );
}

function Amount() {
  const rows: [string, number, number, number, string, number][] = [
    ["R01", 499, 515, 856, "18415", 865],
    ["R02", 526, 542, 881, "20581", 889],
    ["R03", 554, 569, 884, "20872", 892],
    ["R04", 581, 597, 836, "16651", 845],
    ["R05", 608, 624, 875, "20104", 884],
  ];
  return (
    <div className={`${chartBase} ${outlineBase} left-[568px] top-[279px] w-[362px] h-[180px]`}>
      <svg width="362" height="180" viewBox="597 467 362 180" className="block">
        <Defs id="a" />
        <rect x="647" y="494" width="285" height="136" fill="url(#ag)" />
        {rows.map((r) => (
          <rect key={r[0]} x="649" y={r[1] + 3} width={r[3] - 646} height={r[2] - r[1]} fill="#3a4a70" fillOpacity=".65" filter="url(#ab)" />
        ))}
        {rows.map((r) => (
          <rect key={r[0]} x="646" y={r[1] + 0.75} width={r[3] - 646} height={r[2] - r[1] - 0.5} fill="#adadad" stroke="#1c1c1c" strokeWidth="1.500" />
        ))}
        <path d="M646.500 494v136" stroke={axis} />
        {[494, 521, 548, 575, 602, 629].map((y) => (
          <path key={y} d={`M642 ${y + 0.5}h4.500`} stroke={axis} />
        ))}
        <text x="777" y="490" textAnchor="middle" className="text-[14px] font-bold fill-[#15566e]">AMOUNT</text>
        {rows.map((r) => (
          <g key={r[0]}>
            <text x="615" y={(r[1] + r[2]) / 2 + 4} className="text-[11px] fill-[#1a5f80]">{r[0]}</text>
            <text x={r[5]} y={(r[1] + r[2]) / 2 + 5} className="text-[11px] fill-[#1f5c72]">{r[4]}</text>
          </g>
        ))}
      </svg>
    </div>
  );
}

function Rating() {
  const bars: [string, number, number, number, number][] = [
    ["1", 1021, 0, 0, 596],
    ["8", 1070, 1061, 603, 595],
    ["59", 1119, 1110, 593, 584],
    ["197", 1168.500, 1159, 566, 557],
    ["428", 1217.500, 1208, 520, 512],
    ["307", 1266.500, 1257, 544, 536],
  ];
  const lx = [1020.500, 1070, 1119, 1168, 1217, 1266];
  return (
    <div className={`${chartBase} shadow-[3px_4px_8px_rgba(0,0,0,0.45)] left-[950px] top-[283px] w-[325px] h-[172px]`}>
      <svg width="325" height="172" viewBox="979 471 325 172" className="block">
        <Defs id="r" />
        <rect x="997" y="506" width="294" height="98" fill="url(#rg)" />
        {bars.map((b) =>
          b[2] ? <rect key={b[0]} x={b[2]} y={b[3]} width="19" height={604 - b[3]} fill="#7f7f7f" /> : null
        )}
        <path d="M997 604.500h294" stroke={axis} />
        {[997, 1046, 1095, 1144, 1193, 1242, 1291].map((x) => (
          <path key={x} d={`M${x + 0.5} 604v4`} stroke={axis} />
        ))}
        <text x="1141" y="494" textAnchor="middle" className="text-[14px] font-bold fill-[#111]">RATING</text>
        {bars.map((b) => (
          <text key={b[0]} x={b[1]} y={b[4]} textAnchor="middle" className="text-[12px] fill-[#111]">{b[0]}</text>
        ))}
        {lx.map((x, i) => (
          <text key={i} x={x} y="626" textAnchor="middle" className="text-[11px] font-bold fill-[#111]">{i}</text>
        ))}
      </svg>
    </div>
  );
}

function Canvas() {
  return (
    <div className="relative flex-1 h-[500px] overflow-hidden bg-[#034a5c]">
      <Cards />
      <div className={`absolute left-[160px] top-[9px] w-[297px] h-[41px] bg-[#c8e2ff] border border-[#a5adb5] flex items-center pl-[9px] pb-[2px] ${ar} font-bold text-[24px] text-[#115a6e] whitespace-nowrap`}>
        CALL CENTER REPORT
      </div>
      <Monthly />
      <Weekly />
      <Female />
      <Calls />
      <Amount />
      <Rating />
      <div className="absolute left-[864px] top-[18px] w-[74px] h-[23px] border-[3px] border-[#f6ab8e]" />
      <div className="absolute left-[935px] top-[38px] w-[5px] h-[5px] bg-white border border-[#f6ab8e]" />
      <svg width="12" height="16" viewBox="0 0 12 16" className="absolute left-[154px] top-[257px]">
        <path d="M10 0c2 1 2 3 0 5L6 10C4 12 2 15 0 15c-1-3 0-5 2-7z" fill="#fff" stroke="#3a4a55" strokeWidth=".5" />
      </svg>
      <div className="absolute left-[1044px] top-[462px] font-['Open_Sans',sans-serif] text-white/30 whitespace-nowrap">
        <div className="text-[19px] leading-[25px]">Activate Windows</div>
        <div className="text-[14.500px] leading-[20px] -mt-[1px]">Go to Settings to activate Windows.</div>
      </div>
    </div>
  );
}

function VScroll() {
  return (
    <div className="w-[15px] shrink-0 flex flex-col bg-linear-to-r from-[#e6eef8] via-[#7e9dc6] to-[#7a99c2]">
      <div className="h-[7px] bg-[#dfe9f6] border border-[#8aa4c6]" />
      <div className="h-[14px] flex items-center justify-center bg-linear-to-r from-[#bcd0e8] to-[#a8c0de]">
        <svg width="9" height="6" viewBox="0 0 9 6"><path d="M0 6h9L4.500 0z" fill="#47648c" /></svg>
      </div>
      <div className="h-[14px]" />
      <div className="h-[217px] rounded-[2px] border border-[#8098b8] bg-linear-to-r from-[#f0f4fa] to-[#cdd9e8] flex items-center justify-center">
        <svg width="9" height="7" viewBox="0 0 9 7"><path d="M0 .5h9M0 2.500h9M0 4.500h9M0 6.500h9" stroke="#7b8a9e" /></svg>
      </div>
      <div className="flex-1" />
      <div className="h-[14px] flex items-center justify-center bg-linear-to-r from-[#bcd0e8] to-[#a8c0de]">
        <svg width="9" height="6" viewBox="0 0 9 6"><path d="M0 0h9L4.500 6z" fill="#47648c" /></svg>
      </div>
    </div>
  );
}

function NavArrow({ d }: { d: string }) {
  return (
    <svg width="13" height="10" viewBox="0 0 13 10" className="shrink-0"><path d={d} fill="#27426e" stroke="#27426e" strokeWidth=".6" /></svg>
  );
}

function SlantLine({ w }: { w: number }) {
  return (
    <svg width={w} height="16" viewBox={`0 0 ${w} 16`} className="absolute left-0 top-0">
      <path d={`M0 16L${w} 0`} stroke="#7f98bc" fill="none" />
    </svg>
  );
}

function SheetTabs() {
  return (
    <div className={`h-[18px] shrink-0 flex border-t-[2px] border-[#dde8f5] border-b border-b-[#7f9cc4] bg-linear-to-b from-[#b5cbe6] to-[#9cb6d9] ${ui} text-[12px] text-[#27487f]`}>
      <div className="w-[63px] shrink-0 flex items-center pl-[3px] border-r border-[#dbe6f3] bg-[#d3e2f4]">
        <NavArrow d="M3 1v8M10 1L5 5l5 4z" />
        <NavArrow d="M9 1L4 5l5 4z" />
        <NavArrow d="M4 1l5 4-5 4z" />
        <NavArrow d="M3 1l5 4-5 4zM10 1v8" />
      </div>
      <div className="w-[9px] shrink-0 bg-[#d3e2f4]" />
      <div className="relative w-[72px] shrink-0 flex items-center justify-end pr-[13px] bg-[#c9daf0] [clip-path:polygon(10px_0,100%_0,100%_100%,0_100%)]">
        <SlantLine w={10} />
        Sheet14
      </div>
      <div className="relative w-[42px] shrink-0 flex items-center justify-end pr-[10px] bg-[#c3d5ec] [clip-path:polygon(10px_0,100%_0,100%_100%,0_100%)]">
        <SlantLine w={10} />
        Data
      </div>
      <div className="w-[60px] shrink-0 flex items-center justify-center bg-white font-bold text-[13px] text-[#1c3d78] border-r border-[#8aa4c6]">Sheet1</div>
      <div className="relative w-[41px] shrink-0 flex items-center justify-center pr-[4px] bg-[#d9e6f6] [clip-path:polygon(10px_0,100%_0,90%_100%,0_100%)]">
        <SlantLine w={10} />
        <svg width="14" height="14" viewBox="0 0 14 14">
          <path d="M3 3h9v9H3z" fill="#fff" stroke="#5f7a9e" />
          <circle cx="3.500" cy="3.500" r="3" fill="#f0b040" />
        </svg>
      </div>
      <div className="flex-1" />
      <div className="w-[6px] shrink-0 bg-white border border-[#6f86a8] my-[1px]" />
      <div className="w-[18px] shrink-0 flex items-center justify-center">
        <svg width="6" height="9" viewBox="0 0 6 9"><path d="M6 0v9L0 4.500z" fill="#47648c" /></svg>
      </div>
      <div className="w-[402px] shrink-0 my-[1px] rounded-[2px] border border-[#7f94b0] bg-linear-to-b from-[#f3f6fa] via-[#dfe6ef] to-[#b3c1d2] flex items-center justify-center">
        <svg width="7" height="9" viewBox="0 0 7 9"><path d="M.5 0v9M2.500 0v9M4.500 0v9M6.500 0v9" stroke="#7b8a9e" /></svg>
      </div>
      <div className="w-[106px] shrink-0 flex items-center justify-end pr-[7px]">
        <svg width="6" height="9" viewBox="0 0 6 9"><path d="M0 0v9l6-4.500z" fill="#47648c" /></svg>
      </div>
      <div className="w-[6px] shrink-0 bg-white border border-[#6f86a8] my-[1px]" />
      <div className="w-[16px] shrink-0" />
    </div>
  );
}

function StatusBar() {
  return (
    <div className={`h-[20px] shrink-0 flex bg-linear-to-b from-[#dbe9fb] via-[#c8dcf7] to-[#a8c5ec] ${ui} text-[11px] text-[#15428b] border-t border-[#9ab8de]`}>
      <div className="w-[47px] flex items-center pl-[7px] border-r border-[#a8c2e2]">Ready</div>
      <div className="flex-1" />
      <div className="w-[245px] bg-linear-to-b from-[#c5d8f2] to-[#a8c3e6] border-l border-[#9ab8de] flex items-center pl-[5px]">
        <div className="w-[57px] h-[18px] rounded-[3px] border border-[#96aed0] flex overflow-hidden bg-[#c5d7ee]">
          <div className="w-[19px] flex items-center justify-center bg-linear-to-b from-[#fde7b2] to-[#fbc464]">
            <svg width="14" height="12" viewBox="0 0 14 12"><path d="M.5.500h13v11H.5zM.5 4h13M.5 8h13M4.500.5v11M9.500.5v11" fill="#fff" stroke="#5a6470" strokeWidth=".8" /></svg>
          </div>
          <div className="w-[19px] flex items-center justify-center">
            <svg width="12" height="13" viewBox="0 0 12 13"><path d="M.5.500h11v12H.5z" fill="#b9c4d2" stroke="#5a6470" /><path d="M3 3h6v7H3z" fill="#eef2f8" stroke="#5a6470" /></svg>
          </div>
          <div className="w-[19px] flex items-center justify-center">
            <svg width="14" height="12" viewBox="0 0 14 12"><path d="M1.500.5h4v8h-4zM8.500.5h4v8h-4z" fill="#fff" stroke="#5a6470" /><path d="M0 11.500h14" stroke="#5a6470" /></svg>
          </div>
        </div>
        <span className="ml-[7px] w-[27px]">100%</span>
        <div className="ml-[10px] flex items-center relative w-[132px]">
          <span className="w-[15px] h-[15px] rounded-full border border-[#7a8fae] bg-white/70 flex items-center justify-center"><span className="w-[7px] h-[2px] bg-[#47648c]" /></span>
          <span className="flex-1 h-[1px] bg-[#f4f8fd]" />
          <span className="w-[15px] h-[15px] rounded-full border border-[#7a8fae] bg-white/70 flex items-center justify-center relative">
            <span className="w-[9px] h-[2px] bg-[#47648c]" />
            <span className="absolute w-[2px] h-[9px] bg-[#47648c]" />
          </span>
          <svg width="9" height="14" viewBox="0 0 9 14" className="absolute left-[61px] top-0"><path d="M.5.500h8v9L4.500 13 .5 9.500z" fill="#dfe8f4" stroke="#6d85a8" /></svg>
        </div>
      </div>
    </div>
  );
}

function Slot({ w, className = "", children, bar }: { w: string; className?: string; children?: React.ReactNode; bar?: string }) {
  return (
    <div className={`${w} h-[40px] shrink-0 flex items-center justify-center relative ${className}`}>
      {children}
      {bar && <span className={`absolute bottom-0 left-0 right-0 h-[3px] ${bar}`} />}
    </div>
  );
}

function Taskbar() {
  return (
    <div className={`h-[40px] shrink-0 flex text-white bg-linear-to-r from-[#3a3b3c] via-[#454040] to-[#4e3f3e] ${ui}`}>
      <div className="w-[48px] shrink-0 flex items-center justify-center">
        <svg width="17" height="17" viewBox="0 0 17 17">
          <path d="M0 2.500l7-1v6.500H0zM8 1.300L17 0v8H8zM0 9h7v6.500l-7-1zM8 9h9v8l-9-1.300z" fill="#fff" />
        </svg>
      </div>
      <div className="w-[287px] shrink-0 bg-[#f1f1f1] border-t border-[#bdbdbd] flex items-center relative text-[#222] text-[14px]">
        <svg width="20" height="20" viewBox="0 0 20 20" className="ml-[10px]">
          <circle cx="12" cy="8" r="5.500" fill="none" stroke="#222" strokeWidth="1.200" />
          <path d="M8 12l-6 6" stroke="#222" strokeWidth="1.400" />
        </svg>
        <span className="ml-[10px]">Type here to search</span>
        <svg width="62" height="32" viewBox="0 0 62 32" className="absolute left-[216px] top-[4px]">
          <path d="M24 0c1.500 7 4 9 11 11-7 2-9.500 4-11 11-1.500-7-4-9-11-11 7-2 9.500-4 11-11z" fill="#fbc02d" />
          <path d="M45 10c.7 3 2 4 5 5-3 1-4.300 2-5 5-.7-3-2-4-5-5 3-1 4.300-2 5-5z" fill="#fbc02d" />
          <path d="M5 20c.5 2.500 1.500 3.500 4 4-2.500.5-3.500 1.500-4 4-.5-2.500-1.500-3.500-4-4 2.500-.5 3.500-1.500 4-4z" fill="#2a9de8" />
          <circle cx="37" cy="4" r="2" fill="#e85a3a" />
          <circle cx="55" cy="27" r="2" fill="#7ab648" />
        </svg>
      </div>
      <Slot w="w-[50px]">
        <svg width="18" height="22" viewBox="0 0 18 22">
          <path d="M2 1h10M2 21h10" stroke="#fff" />
          <path d="M2.500 5.500h10v10h-10z" fill="none" stroke="#fff" />
          <path d="M16.500 3v4M16.500 10v6" stroke="#fff" strokeWidth="2" />
        </svg>
      </Slot>
      <Slot w="w-[51px]">
        <svg width="26" height="26" viewBox="0 0 26 26">
          <defs>
            <linearGradient id="cp1" x1="0" y1="0" x2="1" y2="1">
              <stop offset="0" stopColor="#38b5e8" />
              <stop offset=".5" stopColor="#d46ad8" />
              <stop offset="1" stopColor="#f07a3a" />
            </linearGradient>
          </defs>
          <path d="M8 1h8c3 0 5 2 5 4l3 14c0 4-3 6-6 6h-8c-3 0-5-2-5-4L2 7C2 4 5 1 8 1z" fill="url(#cp1)" />
          <path d="M11 7h7l-3 12H8z" fill="#4e3f3e" fillOpacity=".65" />
        </svg>
      </Slot>
      <Slot w="w-[47px]" className="bg-[#b0693a]" bar="bg-[#f47a1f]">
        <svg width="26" height="26" viewBox="0 0 26 26">
          <defs>
            <linearGradient id="ed1" x1="0" y1="0" x2="1" y2="1">
              <stop offset="0" stopColor="#3ad0a0" />
              <stop offset=".6" stopColor="#1a9ad8" />
              <stop offset="1" stopColor="#0a5ab8" />
            </linearGradient>
          </defs>
          <circle cx="13" cy="13" r="12.500" fill="url(#ed1)" />
          <path d="M25 15c0-5-5-9-11-7-4 1-7 5-6 10 1 4 5 7 10 6-3 0-6-3-6-6 0-4 6-5 9-3 2 1 3 1 4 0z" fill="#0b3f8f" />
          <path d="M6 20c-2-4-1-9 3-11" stroke="#9af0d0" fill="none" />
        </svg>
      </Slot>
      <Slot w="w-[50px]">
        <svg width="24" height="22" viewBox="0 0 24 22">
          <path d="M1 2h8l2 3h12v16H1z" fill="#f5c33b" />
          <path d="M1 7h22v14H1z" fill="#ffd966" />
          <path d="M7 15h10v6H7z" fill="#2a7fc8" />
          <path d="M9 12h6v5H9z" fill="#3a96e0" />
        </svg>
      </Slot>
      <Slot w="w-[47px]">
        <svg width="24" height="25" viewBox="0 0 24 25">
          <rect x="1" y="5" width="22" height="20" rx="3" fill="#f6f6f6" />
          <path d="M8 6V3c0-3 8-3 8 0v3" fill="none" stroke="#36b0c8" strokeWidth="1.600" />
          <rect x="7.500" y="10" width="4" height="4" fill="#f25022" />
          <rect x="12.500" y="10" width="4" height="4" fill="#7fba00" />
          <rect x="7.500" y="15" width="4" height="4" fill="#00a4ef" />
          <rect x="12.500" y="15" width="4" height="4" fill="#ffb900" />
        </svg>
      </Slot>
      <Slot w="w-[48px]">
        <svg width="25" height="24" viewBox="0 0 25 24">
          <path d="M6 10L16 1l8 7v14H6z" fill="#2a7fd8" />
          <path d="M6 10l18 0v12H6z" fill="#1a5fc0" />
          <path d="M14 3l8 6-6 5-8-5z" fill="#7ac8f4" />
          <rect x="0" y="9" width="12" height="12" rx="2" fill="#0f4c9f" />
          <text x="6" y="19" textAnchor="middle" className="text-[10px] font-bold fill-white">O</text>
        </svg>
      </Slot>
      <Slot w="w-[55px]">
        <svg width="26" height="26" viewBox="0 0 26 26">
          <path d="M19 1l6 3v18l-6 3L8 14.500 3 18.500l-2-1.500V9l2-1.500 5 4z" fill="#0f6fbf" />
          <path d="M19 1l6 3v18l-6 3zM19 7l-7 6 7 6z" fill="#1fa0e8" />
          <path d="M19 7l-7 6 7 6z" fill="#3e3f40" />
        </svg>
      </Slot>
      <Slot w="w-[42px]" bar="bg-[#8cc4ec]">
        <svg width="28" height="30" viewBox="0 0 28 30">
          <circle cx="12" cy="13" r="11.500" fill="#e8453c" />
          <path d="M12 13L2 18A11.500 11.500 0 0 0 15 24z" fill="#34a853" />
          <path d="M12 1.500a11.500 11.500 0 0 1 11 8H12z" fill="#e8453c" />
          <path d="M23 9.500a11.500 11.500 0 0 1-8 14.500l-3-11z" fill="#fbbc05" />
          <circle cx="12" cy="13" r="5" fill="#fff" />
          <circle cx="12" cy="13" r="4" fill="#4285f4" />
          <circle cx="20" cy="21" r="7" fill="#e2762a" />
          <text x="20" y="24.500" textAnchor="middle" className="text-[9px] font-bold fill-white">y</text>
        </svg>
      </Slot>
      <Slot w="w-[5px]" />
      <Slot w="w-[45px]" className="bg-[#615c5a]" bar="bg-[#8cc4ec]">
        <svg width="24" height="26" viewBox="0 0 24 26">
          <rect x="2" y="1" width="21" height="24" fill="#eaf4e4" stroke="#5ea04a" />
          <rect x="10" y="9" width="11" height="13" fill="#8fc878" />
          <path d="M10 13h11M10 17h11M15 9v13" stroke="#fff" />
          <rect x="1" y="6" width="11" height="12" fill="#2f7d32" />
          <text x="6.500" y="16" textAnchor="middle" className="text-[10px] font-bold fill-white">X</text>
        </svg>
      </Slot>
      <Slot w="w-[8px]" />
      <Slot w="w-[40px]" bar="bg-[#8cc4ec]">
        <svg width="26" height="26" viewBox="0 0 26 26">
          <rect width="26" height="26" fill="#1272d6" />
          <rect x="5" y="5" width="16" height="16" fill="none" stroke="#fff" strokeWidth="1.400" />
          <path d="M9 12c0-3 5-4 7-2M17 14c0 3-5 4-7 2M16 7v3h-3M10 19v-3h3" fill="none" stroke="#fff" strokeWidth="1.400" />
        </svg>
      </Slot>
      <div className="w-[145px] shrink-0 flex items-center justify-end">
        <svg width="24" height="30" viewBox="0 0 24 30">
          <defs>
            <linearGradient id="sun" x1="0" y1="0" x2="0" y2="1">
              <stop offset="0" stopColor="#ffc21a" />
              <stop offset="1" stopColor="#f0801a" />
            </linearGradient>
          </defs>
          <circle cx="10.500" cy="17" r="10.500" fill="url(#sun)" />
          <circle cx="16" cy="8" r="6.500" fill="#d8322a" />
          <text x="16" y="11" textAnchor="middle" className="text-[9px] font-bold fill-white">1</text>
        </svg>
      </div>
      <div className="ml-[6px] shrink-0 flex items-center text-[13.500px] w-[100px] whitespace-nowrap text-[#eee]">
        <span>29°C</span>
        <span className="ml-[8px]">Sunny</span>
      </div>
      <div className="shrink-0 flex items-center gap-[9px] text-white">
        <svg width="13" height="8" viewBox="0 0 13 8"><path d="M1 7.500l5.500-6.500L12 7.500" fill="none" stroke="#fff" strokeWidth="1.200" /></svg>
        <svg width="12" height="17" viewBox="0 0 12 17"><path d="M1.500 4h9v9h-9zM2 1h8M2 16h8" fill="none" stroke="#eee" /><path d="M4 7h4v3H4z" fill="none" stroke="#eee" /></svg>
        <svg width="15" height="15" viewBox="0 0 15 15">
          <path d="M3 11a3 3 0 0 1 0-6c1-3 6-3 7 0a3 3 0 0 1 1 6z" fill="#cfcfcf" />
          <circle cx="11" cy="11" r="4" fill="#1272d6" />
          <path d="M11 9v1M11 11v2.500" stroke="#fff" />
        </svg>
        <svg width="16" height="12" viewBox="0 0 16 12"><path d="M5 2.500h10v8H5zM0 5h3M0 8h3M3 3.500v6" fill="none" stroke="#eee" /><path d="M6.500 4h4v5h-4z" fill="#eee" /></svg>
        <svg width="16" height="14" viewBox="0 0 16 14"><path d="M1 13A12 12 0 0 1 13 1M4 13A9 9 0 0 1 13 4M7 13a6 6 0 0 1 6-6" fill="none" stroke="#ddd" /><circle cx="12" cy="12" r="1.500" fill="#eee" /></svg>
        <svg width="16" height="14" viewBox="0 0 16 14"><path d="M1 5h3l4-4v12L4 9H1z" fill="none" stroke="#eee" /><path d="M10 4.500a3 3 0 0 1 0 5M12 2.500a6 6 0 0 1 0 9" fill="none" stroke="#eee" /></svg>
      </div>
      <div className="ml-[5px] w-[35px] shrink-0 flex flex-col items-center text-[12px] leading-[18px] text-[#eee] pt-[2px]">
        <span>ENG</span>
        <span>IN</span>
      </div>
      <div className="w-[70px] shrink-0 flex flex-col items-center text-[12px] leading-[18px] text-[#eee] pt-[2px] whitespace-nowrap">
        <span>1:09 PM</span>
        <span>10/25/2025</span>
      </div>
      <div className="flex-1 relative flex items-center pl-[8px]">
        <svg width="16" height="16" viewBox="0 0 16 16" className="-mt-[4px]">
          <path d="M0 1h16v11H7l-3 3v-3H0z" fill="#fff" />
          <path d="M3 4h10M3 6.500h10M3 9h7" stroke="#333" />
        </svg>
        <span className="absolute left-[15px] top-[20px] w-[17px] h-[17px] rounded-full bg-[#2f2f2f] border border-[#ddd] text-[11px] leading-[15px] text-center text-white">2</span>
      </div>
    </div>
  );
}

export default function App() {
  return (
    <div className="w-[1366px] h-[768px] overflow-hidden flex flex-col bg-white">
      <TitleBar />
      <TabsRow />
      <Ribbon />
      <FormulaBar />
      <div className="h-[522px] shrink-0 flex">
        <div className="w-[1351px] shrink-0 flex flex-col">
          <ColumnHeader />
          <div className="flex h-[500px]">
            <RowHeader />
            <Canvas />
          </div>
          <div className="h-[2px] bg-[#dce7f5]" />
        </div>
        <VScroll />
      </div>
      <SheetTabs />
      <StatusBar />
      <Taskbar />
    </div>
  );
}
